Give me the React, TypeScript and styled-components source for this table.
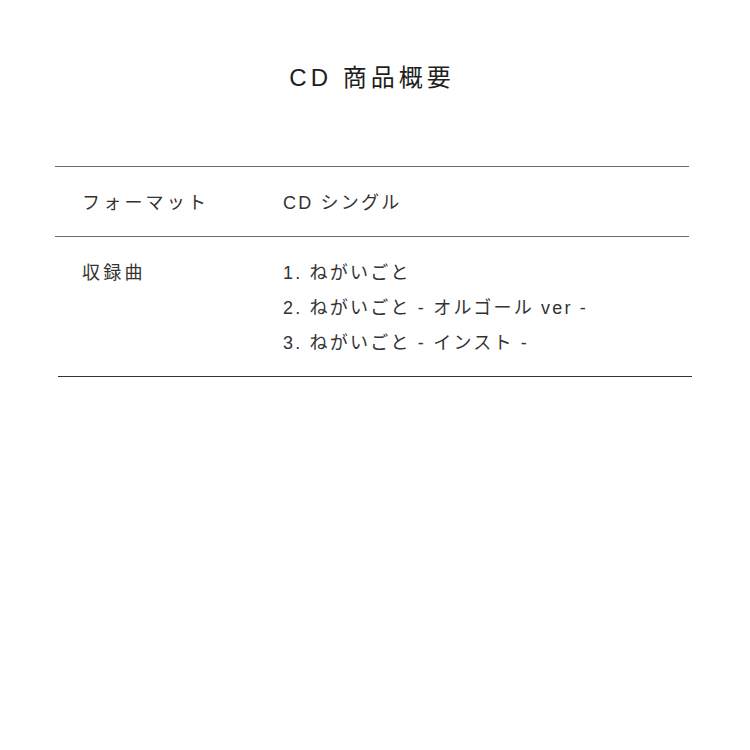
import React from "react";
import styled, { createGlobalStyle } from "styled-components";

interface spec {
  label: string;
  values: string[];
}

const specs: spec[] = [
  { label: "フォーマット", values: ["CD シングル"] },
  {
    label: "収録曲",
    values: [
      "1. ねがいごと",
      "2. ねがいごと - オルゴール ver -",
      "3. ねがいごと - インスト -",
    ],
  },
];

const App = () => {
  return (
    <Page>
      <GlobalStyle />
      <Section>
        <Title>CD 商品概要</Title>
        <SpecList>
          {specs.map((s, indx) => (
            <Row key={indx}>
              <Label>{s.label}</Label>
              <Values>
                {s.values.map((v) => (
                  <Value key={v}>{v}</Value>
                ))}
              </Values>
            </Row>
          ))}
        </SpecList>
        <EndRule />
      </Section>
    </Page>
  );
};

export default App;

const GlobalStyle = createGlobalStyle`
  html, body {
    margin: 0;
    padding: 0;
    background: #ffffff;
  }
  body {
    font-family: "Liberation Sans", "Noto Sans CJK JP", sans-serif;
    color: #333333;
  }
`;

const Page = styled.div`
  width: 750px;
  height: 750px;
  background: #ffffff;
`;

const Section = styled.section`
  width: 634px;
  margin-left: 55px;
  padding-top: 60px;
`;

const Title = styled.h2`
  margin: 0 0 70px;
  text-align: center;
  font-size: 24px;
  line-height: 36px;
  font-weight: 400;
  letter-spacing: 4px;
  color: #1e1e1e;
`;

const SpecList = styled.dl`
  margin: 0;
  border-top: 1px solid #6b6b6b;
`;

const Row = styled.div`
  display: grid;
  grid-template-columns: 228px 1fr;
  padding: 19px 0 15px;
  border-bottom: 1px solid #6b6b6b;

  &:last-child {
    border-bottom: none;
  }
`;

const Label = styled.dt`
  padding-left: 27px;
  font-size: 18px;
  line-height: 35px;
  letter-spacing: 3.2px;
  color: #333333;
`;

const Values = styled.dd`
  margin: 0;
  display: flex;
  flex-direction: column;
`;

const Value = styled.span`
  font-size: 18px;
  line-height: 35px;
  letter-spacing: 2.2px;
  color: #333333;
  white-space: pre;
`;

const EndRule = styled.hr`
  width: 634px;
  margin: 0 0 0 3px;
  border: none;
  border-top: 1px solid #333333;
`;
